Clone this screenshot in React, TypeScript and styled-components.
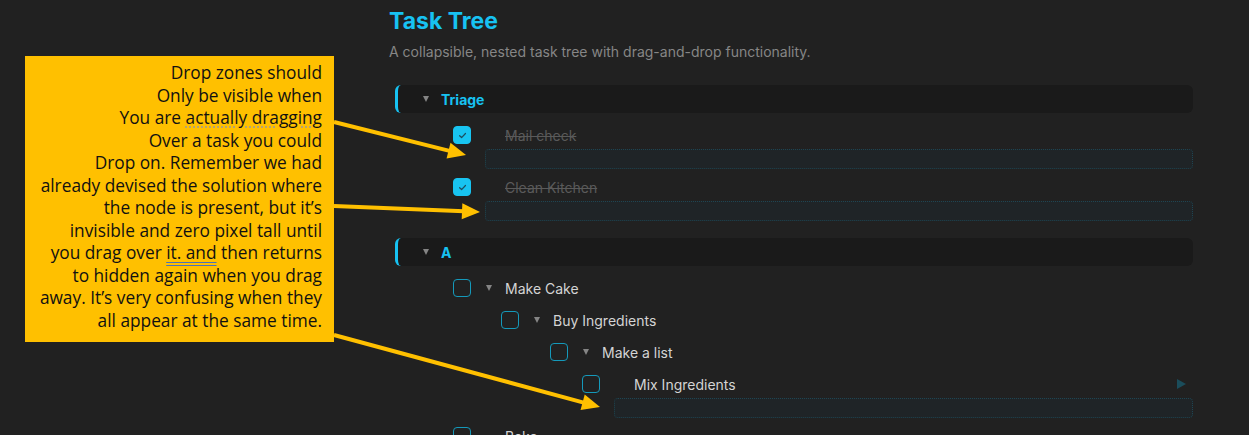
import React from "react";
import styled, { createGlobalStyle } from "styled-components";

const GlobalStyle = createGlobalStyle`
  html, body { margin: 0; padding: 0; background: #212121; overflow: hidden; }
  body { font-family: Inter, "Noto Sans", sans-serif; }
  * { box-sizing: border-box; }
`;

const Page = styled.div`
  position: relative;
  width: 1249px;
  min-height: 100vh;
  background: #212121;
  overflow: hidden;
`;

const Main = styled.main`
  margin-left: 389px;
  width: 810px;
  padding-top: 7px;
`;

const Title = styled.h1`
  margin: 0;
  font-size: 23px;
  line-height: 28px;
  font-weight: 700;
  color: #17c2f2;
`;

const Subtitle = styled.p`
  margin: 7px 0 0;
  font-size: 14px;
  line-height: 20px;
  color: #868686;
`;

const Tree = styled.div`
  margin-top: 23px;
  padding: 0 6px;
  display: flex;
  flex-direction: column;
`;

const Group = styled.section`
  margin-bottom: 17px;
`;

const GroupHeader = styled.div`
  height: 28px;
  display: flex;
  align-items: center;
  gap: 12px;
  padding-left: 25px;
  background: #1a1a1a;
  border-left: 3px solid #17c2f2;
  border-radius: 6px;
  font-size: 14px;
  font-weight: 700;
  color: #17c2f2;
`;

const Caret = styled.span`
  width: 0;
  height: 0;
  border-left: 3.5px solid transparent;
  border-right: 3.5px solid transparent;
  border-top: 6px solid #858585;
`;

const GroupBody = styled.div`
  padding-top: 8px;
  display: flex;
  flex-direction: column;
`;

const TaskRow = styled.div<{ $indent: number }>`
  height: 28px;
  display: flex;
  align-items: center;
  padding-left: ${(p) => 58 + p.$indent}px;
  &:not(:first-child) {
    margin-top: 4px;
  }
`;

const Check = styled.span<{ $done: boolean }>`
  width: 18px;
  height: 18px;
  flex: none;
  border-radius: 4px;
  display: flex;
  align-items: center;
  justify-content: center;
  background: ${(p) => (p.$done ? "#18c4f1" : "transparent")};
  border: 1.5px solid ${(p) => (p.$done ? "#18c4f1" : "#1599ba")};
`;

const ToggleSlot = styled.span`
  width: 16px;
  margin: 0 8px 0 10px;
  display: flex;
  justify-content: center;
`;

const TaskLabel = styled.span<{ $done: boolean }>`
  font-size: 14px;
  color: ${(p) => (p.$done ? "#5a5a5a" : "#d4d4d4")};
  text-decoration: ${(p) => (p.$done ? "line-through" : "none")};
  white-space: nowrap;
`;

const Handle = styled.span`
  margin-left: auto;
  margin-right: 7px;
  width: 0;
  height: 0;
  border-top: 5.5px solid transparent;
  border-bottom: 5.5px solid transparent;
  border-left: 9px solid #1b4d5b;
`;

const DropZone = styled.div<{ $indent: number }>`
  height: 20px;
  margin-left: ${(p) => 90 + p.$indent}px;
  background: #1f2427;
  border: 1px dotted #1e4552;
  border-radius: 4px;
`;

const Note = styled.div`
  position: absolute;
  left: 25px;
  top: 56px;
  width: 309px;
  height: 286px;
  background: #ffc000;
  padding: 6px 12px 0 0;
  text-align: right;
  font-family: "Open Sans", "Noto Sans", sans-serif;
  font-size: 17.3px;
  line-height: 22.5px;
  color: #111;
`;

const NoteLine = styled.div`
  white-space: nowrap;
`;

const Spell = styled.span`
  text-decoration: underline dotted #9b9b9b;
  text-underline-offset: 3px;
`;

const Grammar = styled.span`
  text-decoration: underline double #4b72b8;
  text-underline-offset: 3px;
`;

const ArrowLayer = styled.svg`
  position: absolute;
  left: 0;
  top: 0;
  pointer-events: none;
`;

type Task = { id: string; label: string; indent: number; done?: boolean; toggle?: boolean; drop?: boolean; handle?: boolean };

const groups: { name: string; tasks: Task[] }[] = [
  {
    name: "Triage",
    tasks: [
      { id: "m", label: "Mail check", indent: 0, done: true, drop: true },
      { id: "c", label: "Clean Kitchen", indent: 0, done: true, drop: true },
    ],
  },
  {
    name: "A",
    tasks: [
      { id: "mc", label: "Make Cake", indent: 0, toggle: true },
      { id: "bi", label: "Buy Ingredients", indent: 48, toggle: true },
      { id: "ml", label: "Make a list", indent: 97, toggle: true },
      { id: "mi", label: "Mix Ingredients", indent: 129, drop: true, handle: true },
      { id: "b", label: "Bake", indent: 0 },
    ],
  },
];

const CheckMark = () => (
  <svg width="9" height="9" viewBox="0 0 10 10" fill="none">
    <path d="M1.8 5.2 L4 7.3 L8.3 2.8" stroke="#1d4e60" strokeWidth="1.4" strokeLinecap="round" strokeLinejoin="round" />
  </svg>
);

const arrows: [number, number, number, number][] = [
  [334, 122, 466, 155],
  [334, 206, 480, 212],
  [334, 335, 600, 407],
];

const Arrow = ({ a }: { a: [number, number, number, number] }) => {
  const [x1, y1, x2, y2] = a;
  const len = Math.hypot(x2 - x1, y2 - y1);
  const dx = (x2 - x1) / len;
  const dy = (y2 - y1) / len;
  const hl = 18;
  const hw = 8;
  const bx = x2 - dx * hl;
  const by = y2 - dy * hl;
  const pts = `${x2},${y2} ${bx - dy * hw},${by + dx * hw} ${bx + dy * hw},${by - dx * hw}`;
  return (
    <g>
      <line x1={x1} y1={y1} x2={bx + dx * 2} y2={by + dy * 2} stroke="#ffc000" strokeWidth="4" />
      <polygon points={pts} fill="#ffc000" />
    </g>
  );
};

export default function App() {
  return (
    <Page>
      <GlobalStyle />
      <Main>
        <Title>Task Tree</Title>
        <Subtitle>A collapsible, nested task tree with drag-and-drop functionality.</Subtitle>
        <Tree>
          {groups.map((g) => (
            <Group key={g.name}>
              <GroupHeader>
                <Caret />
                <span>{g.name}</span>
              </GroupHeader>
              <GroupBody>
                {g.tasks.map((t) => (
                  <React.Fragment key={t.id}>
                    <TaskRow $indent={t.indent}>
                      <Check $done={!!t.done}>{t.done && <CheckMark />}</Check>
                      <ToggleSlot>{t.toggle && <Caret />}</ToggleSlot>
                      <TaskLabel $done={!!t.done}>{t.label}</TaskLabel>
                      {t.handle && <Handle />}
                    </TaskRow>
                    {t.drop && <DropZone $indent={t.indent} />}
                  </React.Fragment>
                ))}
              </GroupBody>
            </Group>
          ))}
        </Tree>
      </Main>
      <Note>
        <NoteLine>Drop zones should</NoteLine>
        <NoteLine>Only be visible when</NoteLine>
        <NoteLine>
          You are <Spell>actually dragging</Spell>
        </NoteLine>
        <NoteLine>Over a task you could</NoteLine>
        <NoteLine>Drop on. Remember we had</NoteLine>
        <NoteLine>already devised the solution where</NoteLine>
        <NoteLine>the node is present, but it’s</NoteLine>
        <NoteLine>invisible and zero pixel tall until</NoteLine>
        <NoteLine>
          you drag over <Grammar>it. and</Grammar> then returns
        </NoteLine>
        <NoteLine>to hidden again when you drag</NoteLine>
        <NoteLine>away. It’s very confusing when they</NoteLine>
        <NoteLine>all appear at the same time.</NoteLine>
      </Note>
      <ArrowLayer width="1249" height="435" viewBox="0 0 1249 435">
        {arrows.map((a, i) => (
          <Arrow key={i} a={a} />
        ))}
      </ArrowLayer>
    </Page>
  );
}
